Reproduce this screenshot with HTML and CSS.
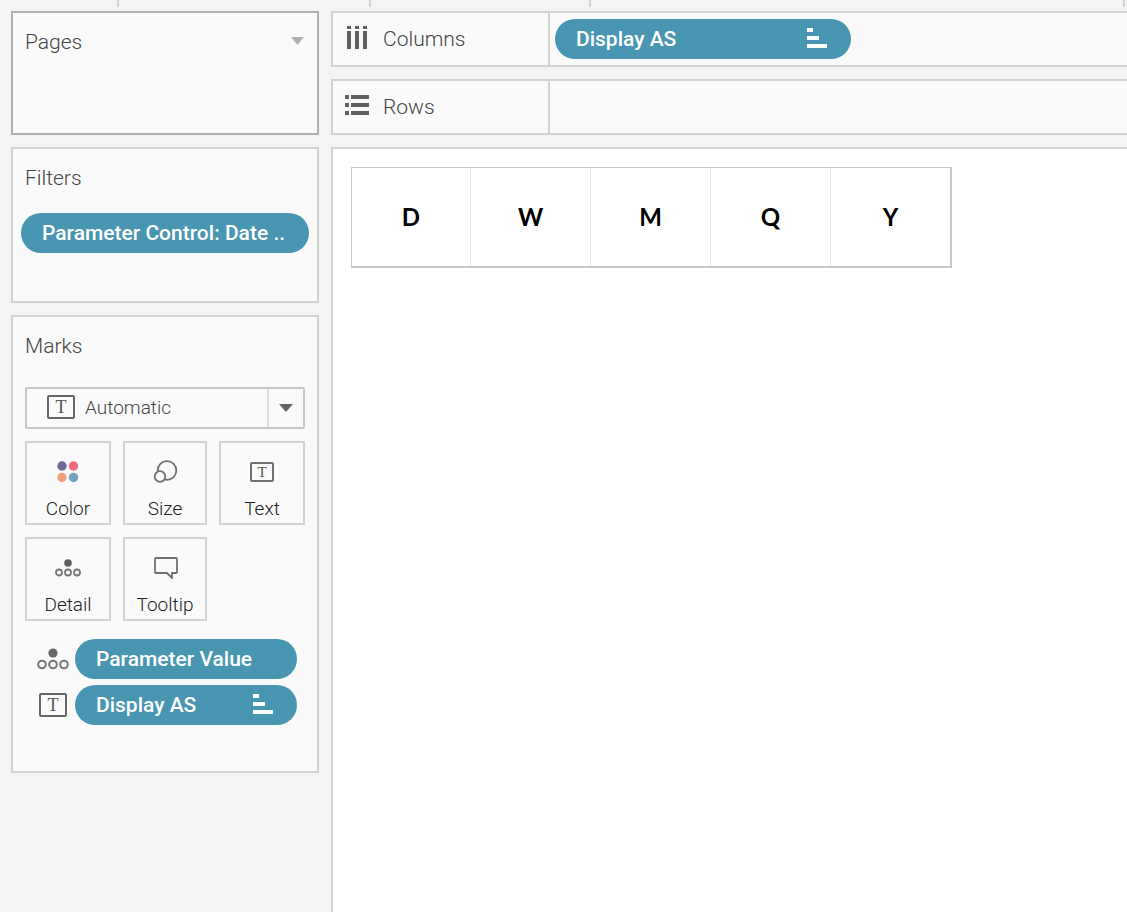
FILE: index.html
```html
<!DOCTYPE html>
<html lang="en">
<head>
    <meta charset="UTF-8">
    <meta name="viewport" content="width=device-width, initial-scale=1.0">
    <title>Display AS</title>
    <link rel="stylesheet" href="styles.css">
</head>
<body>

<div class="toolbar-edge">
    <span></span>
    <span></span>
    <span></span>
    <span></span>
</div>

<div class="workspace">
    <aside class="sidebar">
        <section class="card pages">
            <h2>Pages</h2>
            <svg class="caret" width="13" height="8" viewBox="0 0 13 8"><path d="M0 0h13L6.5 8z" fill="#b0b0b0"/></svg>
        </section>

        <section class="card filters">
            <h2>Filters</h2>
            <button class="pill">Parameter Control: Date ..</button>
        </section>

        <section class="card marks">
            <h2>Marks</h2>
            <div class="mark-type">
                <svg class="mark-icon" width="28" height="24" viewBox="0 0 28 24">
                    <rect x="1" y="1" width="26" height="22" rx="1" fill="none" stroke="#666" stroke-width="2"/>
                    <text class="glyph" x="14" y="18" font-size="18">T</text>
                </svg>
                <select aria-label="Mark type">
                    <option>Automatic</option>
                </select>
                <span class="mark-arrow">
                    <svg width="14" height="8" viewBox="0 0 14 8"><path d="M0 0h14L7 8z" fill="#666"/></svg>
                </span>
            </div>

            <div class="mark-buttons">
                <button>
                    <svg width="28" height="28" viewBox="0 0 28 28">
                        <circle cx="8" cy="8" r="4.7" fill="#736a93"/>
                        <circle cx="19.5" cy="8" r="4.7" fill="#f0697f"/>
                        <circle cx="8" cy="19.5" r="4.7" fill="#f0a07c"/>
                        <circle cx="19.5" cy="19.5" r="4.7" fill="#74a3c0"/>
                    </svg>
                    Color
                </button>
                <button>
                    <svg width="28" height="28" viewBox="0 0 28 28">
                        <g fill="#fafafa" stroke="#707070" stroke-width="1.8">
                            <circle cx="16" cy="12.5" r="9.3"/>
                            <circle cx="9" cy="18.5" r="5.3"/>
                        </g>
                    </svg>
                    Size
                </button>
                <button>
                    <svg width="28" height="28" viewBox="0 0 28 28">
                        <rect x="3" y="5" width="22" height="18" rx="1" fill="none" stroke="#707070" stroke-width="2"/>
                        <text class="glyph" x="14" y="19" font-size="15">T</text>
                    </svg>
                    Text
                </button>
                <button>
                    <svg width="28" height="28" viewBox="0 0 28 28">
                        <circle cx="14" cy="9" r="3.8" fill="#606060"/>
                        <g fill="none" stroke="#777" stroke-width="1.8">
                            <circle cx="5" cy="18.5" r="3"/>
                            <circle cx="14" cy="18.5" r="3"/>
                            <circle cx="23" cy="18.5" r="3"/>
                        </g>
                    </svg>
                    Detail
                </button>
                <button>
                    <svg width="28" height="28" viewBox="0 0 28 28">
                        <path d="M5 4h20q1 0 1 1v13q0 1-1 1h-4v5l-5-5H5q-1 0-1-1V5q0-1 1-1z" fill="none" stroke="#707070" stroke-width="1.8" stroke-linejoin="round"/>
                    </svg>
                    Tooltip
                </button>
            </div>

            <div class="mark-fields">
                <svg width="32" height="24" viewBox="0 0 32 24">
                    <circle cx="16" cy="6" r="4.6" fill="#666"/>
                    <g fill="none" stroke="#777" stroke-width="2">
                        <circle cx="5" cy="17.5" r="3.8"/>
                        <circle cx="16" cy="17.5" r="3.8"/>
                        <circle cx="27" cy="17.5" r="3.8"/>
                    </g>
                </svg>
                <button class="pill">Parameter Value</button>
                <svg width="28" height="24" viewBox="0 0 28 24">
                    <rect x="1" y="1" width="26" height="22" rx="1" fill="none" stroke="#666" stroke-width="2"/>
                    <text class="glyph" x="14" y="18" font-size="18">T</text>
                </svg>
                <button class="pill">
                    Display AS
                    <svg width="20" height="22" viewBox="0 0 20 22"><path d="M0 0h6v4H0zM0 8h12v4H0zM0 16h20v4H0z" fill="#fff"/></svg>
                </button>
            </div>
        </section>
    </aside>

    <main class="content">
        <div class="shelf">
            <div class="shelf-name">
                <svg width="26" height="26" viewBox="0 0 26 26">
                    <path d="M3 0h4v3H3zM11 0h4v3h-4zM19 0h4v3h-4zM3 5h4v18H3zM11 5h4v18h-4zM19 5h4v18h-4z" fill="#606060"/>
                </svg>
                Columns
            </div>
            <div class="shelf-fields">
                <button class="pill">
                    Display AS
                    <svg width="20" height="22" viewBox="0 0 20 22"><path d="M0 0h6v4H0zM0 8h12v4H0zM0 16h20v4H0z" fill="#fff"/></svg>
                </button>
            </div>
        </div>
        <div class="shelf">
            <div class="shelf-name">
                <svg width="26" height="26" viewBox="0 0 26 26">
                    <path d="M1 1h4v4H1zM1 9h4v4H1zM1 17h4v4H1zM7 1h18v4H7zM7 9h18v4H7zM7 17h18v4H7z" fill="#606060"/>
                </svg>
                Rows
            </div>
            <div class="shelf-fields"></div>
        </div>
        <div class="view">
            <table>
                <tr>
                    <td>D</td>
                    <td>W</td>
                    <td>M</td>
                    <td>Q</td>
                    <td>Y</td>
                </tr>
            </table>
        </div>
    </main>
</div>

</body>
</html>
```
FILE: styles.css
```css
* {
    box-sizing: border-box;
}
body {
    display: flex;
    flex-direction: column;
    min-height: 100vh;
    margin: 0;
    background-color: #f4f4f4;
    color: #444;
    font-family: Roboto, "Open Sans", sans-serif;
    font-size: 21px;
    font-weight: 300;
    line-height: 24px;
}
svg {
    flex: none;
}
button, select {
    margin: 0;
    font: inherit;
    color: inherit;
    cursor: pointer;
}
.glyph {
    fill: #555;
    font-family: "Liberation Serif", serif;
    font-weight: 400;
    text-anchor: middle;
}

/* bottom edge of the toolbar */
.toolbar-edge {
    display: grid;
    grid-template-columns: 119px 252px 220px 534px;
    height: 11px;
    overflow: hidden;
}
.toolbar-edge span {
    height: 7px;
    border-right: 2px solid #d2d2d2;
}

.workspace {
    display: flex;
    flex: 1;
    gap: 12px;
    padding-left: 11px;
}

/* sidebar */
.sidebar {
    display: flex;
    flex: none;
    flex-direction: column;
    gap: 12px;
    width: 308px;
}
.card {
    border: 2px solid #d2d2d2;
    background: #fafafa;
}
.card h2 {
    margin: 0;
    font-size: 21px;
    font-weight: 300;
    line-height: 24px;
}
.pages {
    display: flex;
    justify-content: space-between;
    min-height: 124px;
    padding: 17px 13px 17px 12px;
    border-color: #b0b0b0;
}
.caret {
    margin-top: 7px;
}
.filters {
    min-height: 156px;
    padding: 17px 8px;
}
.filters h2 {
    padding: 0 4px;
}
.filters .pill {
    width: 288px;
    margin-top: 23px;
}
.marks {
    padding: 17px 12px 46px;
}

.pill {
    display: flex;
    align-items: center;
    justify-content: space-between;
    height: 40px;
    padding: 0 24px 0 21px;
    border: none;
    border-radius: 20px;
    background: #4996b2;
    color: white;
    font-weight: 500;
    white-space: nowrap;
}
.filters .pill {
    padding-right: 8px;
}

/* mark type drop-down */
.mark-type {
    position: relative;
    height: 42px;
    margin-top: 29px;
}
.mark-type select {
    width: 100%;
    height: 100%;
    padding: 0 40px 0 58px;
    border: 2px solid #c8c8c8;
    border-radius: 2px;
    background: #fafafa;
    appearance: none;
    font-size: 19px;
}
.mark-icon {
    position: absolute;
    top: 8px;
    left: 22px;
}
.mark-arrow {
    position: absolute;
    top: 2px;
    right: 2px;
    bottom: 2px;
    display: flex;
    align-items: center;
    justify-content: center;
    width: 36px;
    border-left: 2px solid #e0e0e0;
    pointer-events: none;
}

.mark-buttons {
    display: grid;
    grid-template-columns: 86px 84px 86px;
    gap: 12px;
    margin-top: 12px;
}
.mark-buttons button {
    display: flex;
    flex-direction: column;
    align-items: center;
    gap: 11px;
    height: 84px;
    padding: 15px 0 0;
    border: 2px solid #d2d2d2;
    background: #fafafa;
    color: #222;
    font-size: 19px;
}

.mark-fields {
    display: grid;
    grid-template-columns: 32px 222px;
    align-items: center;
    justify-items: center;
    gap: 6px;
    margin: 18px 0 0 12px;
}
.mark-fields .pill {
    width: 222px;
}

/* shelves and view */
.content {
    display: flex;
    flex: 1;
    flex-direction: column;
    gap: 12px;
    min-width: 0;
}
.shelf {
    display: flex;
    height: 56px;
    border: 2px solid #d2d2d2;
    border-right: none;
    background: #fafafa;
}
.shelf-name {
    display: flex;
    align-items: center;
    gap: 13px;
    width: 217px;
    padding-left: 11px;
    border-right: 2px solid #d2d2d2;
}
.shelf-fields {
    display: flex;
    align-items: center;
    padding-left: 5px;
}
.shelf-fields .pill {
    width: 296px;
}
.view {
    flex: 1;
    padding: 18px;
    border: 2px solid #d2d2d2;
    border-right: none;
    border-bottom: none;
    background: white;
}
.view table {
    border: 1px solid #c8c8c8;
    border-right-width: 2px;
    border-bottom-width: 2px;
    border-spacing: 0;
}
.view td {
    width: 120px;
    height: 98px;
    padding: 0;
    border-right: 1px solid #e8e8e8;
    color: black;
    font-family: Lato, sans-serif;
    font-size: 24px;
    font-weight: 700;
    text-align: center;
}
.view td:last-child {
    width: 119px;
    border-right: none;
}
.view td:first-child {
    width: 119px;
}
```
